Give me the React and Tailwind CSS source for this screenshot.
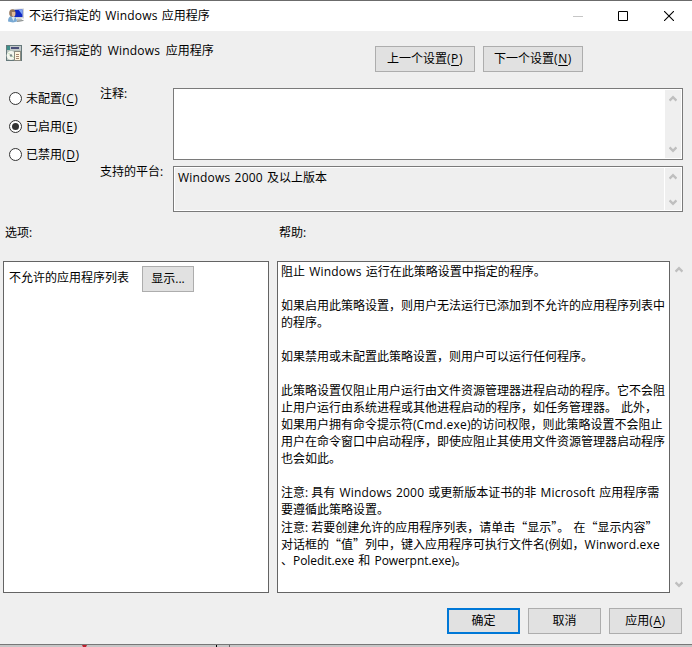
import React, { useState } from "react";

const helpLines = [
  "阻止 Windows 运行在此策略设置中指定的程序。",
  "",
  "如果启用此策略设置，则用户无法运行已添加到不允许的应用程序列表中",
  "的程序。",
  "",
  "如果禁用或未配置此策略设置，则用户可以运行任何程序。",
  "",
  "此策略设置仅阻止用户运行由文件资源管理器进程启动的程序。它不会阻",
  "止用户运行由系统进程或其他进程启动的程序，如任务管理器。 此外，",
  "如果用户拥有命令提示符(Cmd.exe)的访问权限，则此策略设置不会阻止",
  "用户在命令窗口中启动程序，即使应阻止其使用文件资源管理器启动程序",
  "也会如此。",
  "",
  "注意: 具有 Windows 2000 或更新版本证书的非 Microsoft 应用程序需",
  "要遵循此策略设置。",
  "注意: 若要创建允许的应用程序列表，请单击“显示”。 在“显示内容”",
  "对话框的“值”列中，键入应用程序可执行文件名(例如，Winword.exe",
  "、Poledit.exe 和 Powerpnt.exe)。",
];

const states = [
  { id: "none", label: "未配置", hotkey: "C" },
  { id: "enabled", label: "已启用", hotkey: "E" },
  { id: "disabled", label: "已禁用", hotkey: "D" },
];

const Hotkey = ({ label, hotkey }) => (
  <span>
    {label}
    <span className="tracking-[0.6px]">
      (<span className="underline underline-offset-2">{hotkey}</span>)
    </span>
  </span>
);

// Curly quotes take a full cell, so they come from the Chinese face;
// Latin words are set slightly wider than the font's own spacing
const MixedText = ({ text }) =>
  text.split(/([“”]|: |[A-Za-z0-9.]+)/).map((part, i) => {
    if (part === "“" || part === "”") {
      return <span key={i} className="font-['Noto_Sans_CJK_SC',sans-serif]">{part}</span>;
    }
    if (part === ": ") {
      return <span key={i} className="[word-spacing:0]">{part}</span>;
    }
    if (/^P[a-z]+\.exe$/.test(part)) {
      return <span key={i} className="tracking-[-0.05px]">{part}</span>;
    }
    if (/^[A-Za-z0-9.]+$/.test(part)) {
      return <span key={i} className="tracking-[0.2px]">{part}</span>;
    }
    return part;
  });

const Button = ({ className = "border border-[#adadad]", width, children }) => (
  <button className={`flex h-[26px] items-center justify-center bg-[#e1e1e1] leading-4 ${width} ${className}`}>
    {children}
  </button>
);

const Arrow = ({ down = false }) => (
  <svg width="8" height="7" viewBox="0 0 8 7" className={down ? "rotate-180" : ""}>
    <path d="M0.5 5.6 L4 2.1 L7.5 5.6" fill="none" stroke="#bfbfbf" strokeWidth="2.4" />
  </svg>
);

const ScrollBar = ({ className = "" }) => (
  <div className={`flex shrink-0 flex-col items-center justify-between bg-[#efefef] ${className}`}>
    <Arrow />
    <Arrow down />
  </div>
);

const UserIcon = () => (
  <svg width="16" height="16" viewBox="0 0 16 16">
    <path d="M4.5 1 L16 0.5 V10.5 L4.5 10 Z" fill="#cfd3d6" />
    <path d="M5.5 2 L14.5 1.5 V9 L5.5 9 Z" fill="#1029c4" />
    <path d="M10.5 1.8 L14.5 1.5 V7 Z" fill="#7fa4f3" />
    <path d="M9 10.5 H13 L15.5 13 L9 14 Z" fill="#bfc1c0" />
    <path d="M9 13.4 L15.5 12.4" stroke="#8d9393" />
    <path d="M0 13.5 Q0 8 4 8 Q9 8.5 9 13.5 L5 14.5 Z" fill="#79a9d3" />
    <path d="M3.5 9 L5.5 13 L7 9 Z" fill="#dceaf4" />
    <ellipse cx="4.4" cy="5" rx="3.2" ry="3.8" fill="#94765c" />
    <path d="M3.8 4 H7.2 V7.4 L5.8 9 L4 7.4 Z" fill="#e3bd98" />
  </svg>
);

const PolicyIcon = () => (
  <svg width="16" height="16" viewBox="0 0 16 16">
    <rect width="16" height="16" fill="#66797b" />
    <rect x="1" y="1" width="3" height="4" fill="#3f8f8a" />
    <rect x="4" y="1" width="11" height="4" fill="#c3c9cb" />
    <rect x="5" y="2" width="8" height="2" fill="#4a4e78" />
    <rect x="1" y="5" width="14" height="10" fill="#b9c4bf" />
    <circle cx="5" cy="10.5" r="4.4" fill="#f5f7ef" />
    <path d="M2.5 8 L5 10.5 L8 12.5" stroke="#b5d6ab" fill="none" />
    <circle cx="5" cy="10.5" r="1.2" fill="#7d8989" />
    <rect x="8" y="6" width="7" height="10" fill="#8a8a80" />
    <rect x="9" y="7" width="5" height="8" fill="#fff6df" />
    <path d="M10 9.5h3M10 11.5h3M10 13.5h3" stroke="#a58571" />
  </svg>
);

const TitleBar = () => (
  <header className="flex h-[30px] shrink-0 items-center bg-white pl-2">
    <UserIcon />
    <h1 className="ml-[5px] leading-4 [word-spacing:1px]"><MixedText text="不运行指定的 Windows 应用程序" /></h1>
    <div className="mr-[18px] ml-auto flex items-center gap-9">
      <svg className="-mr-px" width="10" height="10" viewBox="0 0 10 10"><path d="M0 5.5h10" stroke="#c6c6c6" /></svg>
      <svg width="10" height="10" viewBox="0 0 10 10"><path d="M.5 .5h9v9h-9z" fill="none" stroke="#000" /></svg>
      <svg width="10" height="10" viewBox="0 0 10 10"><path d="M0 0 L10 10 M10 0 L0 10" stroke="#000" strokeWidth="1.1" /></svg>
    </div>
  </header>
);

const App = () => {
  const [selected, setSelected] = useState("enabled");

  return (
    <div className="flex h-[647px] w-[692px] flex-col overflow-hidden border-t border-[#6b6b6b] bg-[#efefef] font-['Open_Sans','Noto_Sans_CJK_SC',sans-serif] text-[12px] leading-[17px] text-black">
      <TitleBar />

      <div className="flex h-[57px] shrink-0 items-start">
        <div className="flex items-start gap-2 pt-[11px] pl-1.5">
          <span className="pt-[3px]"><PolicyIcon /></span>
          <h2 className="[word-spacing:2.5px]"><MixedText text="不运行指定的 Windows 应用程序" /></h2>
        </div>
        <div className="mt-[15px] mr-[109px] ml-auto flex gap-2">
          <Button width="w-[100px]"><Hotkey label="上一个设置" hotkey="P" /></Button>
          <Button width="w-[100px]"><Hotkey label="下一个设置" hotkey="N" /></Button>
        </div>
      </div>

      <div className="flex h-[136px] shrink-0">
        <div className="flex w-[100px] flex-col gap-[11px] pt-0.5 pl-[9px]">
          {states.map((state) => (
            <label key={state.id} className="flex items-center gap-1">
              <input
                type="radio"
                name="state"
                className="sr-only"
                checked={selected === state.id}
                onChange={() => setSelected(state.id)}
              />
              <span className="flex size-[13px] items-center justify-center rounded-full border border-[#333] bg-white">
                {selected === state.id && <span className="size-[7px] rounded-full bg-[#333]" />}
              </span>
              <Hotkey label={state.label} hotkey={state.hotkey} />
            </label>
          ))}
        </div>
        <div className="flex w-[73px] flex-col gap-[61px]">
          <span className="-mt-[3px]">注释:</span>
          <span>支持的平台:</span>
        </div>
        <div className="flex w-[510px] flex-col gap-1.5">
          <div className="flex h-[72px] justify-end border border-[#7a7a7a] bg-white p-px">
            <ScrollBar className="w-4 py-[5px]" />
          </div>
          <div className="flex h-[46px] border border-[#7a7a7a] bg-white p-px">
            <p className="mr-px flex-1 bg-[#efefef] pt-px pl-[3px] [word-spacing:1px]">
              <MixedText text="Windows 2000 及以上版本" />
            </p>
            <ScrollBar className="w-4 pt-[5px] pb-1" />
          </div>
        </div>
      </div>

      <div className="flex h-[37px] shrink-0 pl-[5px]">
        <span className="w-[274px]">选项:</span>
        <span>帮助:</span>
      </div>

      <div className="flex h-[332px] shrink-0 pl-[3px]">
        <section className="flex w-[266px] items-start border border-[#646464] bg-white">
          <span className="mt-[7px] ml-[5px] w-[133px]">不允许的应用程序列表</span>
          <Button width="w-[52px]" className="mt-1 border border-[#adadad]">显示...</Button>
        </section>
        <section className="ml-2 w-[393px] border border-[#646464] bg-white pt-px pl-[3px] [word-spacing:1px]">
          {helpLines.map((line, i) => (
            <p key={i} className="h-[17px] whitespace-pre">
              <MixedText text={line} />
            </p>
          ))}
        </section>
        <ScrollBar className="ml-px w-[15px] py-[5px]" />
      </div>

      <footer className="flex h-[52px] shrink-0 justify-end gap-2 border-b border-[#777] pt-[15px] pr-2.5">
        <Button width="w-[73px]" className="border-2 border-[#0078d7]">确定</Button>
        <Button width="w-[73px]">取消</Button>
        <Button width="w-[73px]"><Hotkey label="应用" hotkey="A" /></Button>
      </footer>

      {/* strip of the desktop under the window */}
      <div className="flex flex-1 items-start bg-[#c6c6c6] pl-[82px]">
        <svg width="150" height="2" viewBox="0 0 150 2">
          <path d="M0 0h5l-1 2h-3z" fill="#bc202e" />
          <path d="M134.5 0v2" stroke="#000" />
          <path d="M147.5 0v2" stroke="#666" />
        </svg>
      </div>
    </div>
  );
};

export default App;
